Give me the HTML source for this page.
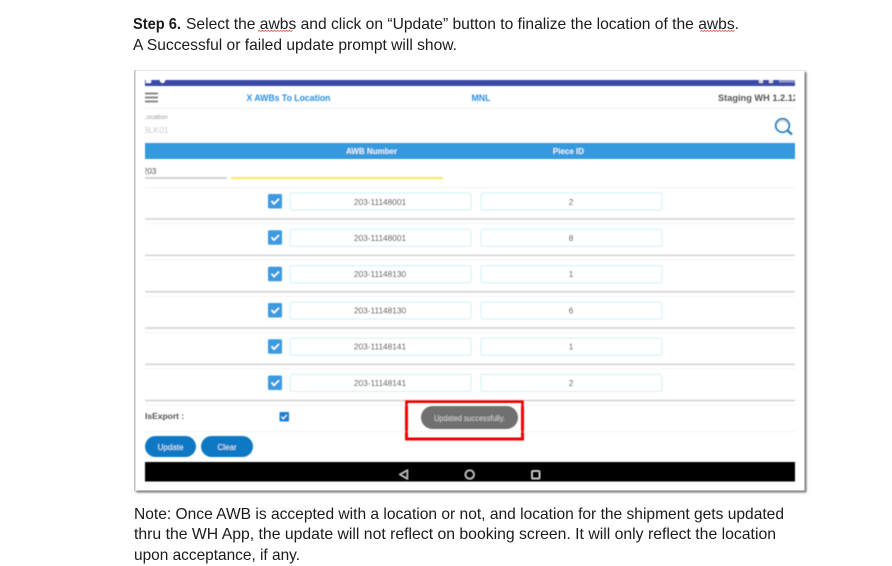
<!DOCTYPE html>
<html>
<head>
<meta charset="utf-8">
<style>
html,body{margin:0;padding:0;background:#fff;width:892px;height:566px;overflow:hidden}
svg{display:block;font-family:"Liberation Sans",sans-serif}
.doc{font-size:16px;fill:#1c1c1c}
.b{font-weight:bold}
.shot text{font-family:"Liberation Sans",sans-serif}
.num{font-size:8.300px;fill:#333;text-anchor:middle}
</style>
</head>
<body>
<svg width="892" height="566" viewBox="0 0 892 566" xmlns="http://www.w3.org/2000/svg">
<defs>
  <filter id="s" x="-5%" y="-5%" width="110%" height="110%"><feGaussianBlur stdDeviation="1"/></filter>
  <filter id="t" x="-5%" y="-5%" width="110%" height="110%"><feGaussianBlur stdDeviation="0.4"/></filter>
  <clipPath id="c"><rect x="145" y="70" width="650" height="420"/></clipPath>
  <g id="row">
    <rect x="145" y="4" width="650" height="1" fill="#f3f3f3"/>
    <rect x="268" y="-25" width="14" height="14.500" rx="1.500" fill="#3a9ae0"/>
    <path d="M271.500 -18l2.500 2.800 5-5" fill="none" stroke="#fff" stroke-width="1.600"/>
    <rect x="290" y="-26" width="181" height="17" rx="2" fill="#fff" stroke="#cff1f1" stroke-width="1"/>
    <rect x="481" y="-26" width="181" height="17" rx="2" fill="#fff" stroke="#cff1f1" stroke-width="1"/>
    <rect x="145" y="-.8" width="650" height="1.600" fill="#d4d4d4"/>
  </g>
</defs>

<text class="doc b" x="133" y="29" textLength="48" lengthAdjust="spacingAndGlyphs">Step 6.</text>
<text class="doc" x="186" y="29" textLength="553" lengthAdjust="spacingAndGlyphs">Select the awbs and click on “Update” button to finalize the location of the awbs.</text>
<path d="M258 31.500l1.500-1.200 1.500 1.200 1.500-1.200 1.500 1.200 1.500-1.200 1.500 1.200 1.500-1.200 1.500 1.200 1.500-1.200 1.500 1.200 1.500-1.200 1.500 1.200 1.500-1.200 1.500 1.200 1.500-1.200 1.500 1.200 1.500-1.200 1.500 1.200 1.500-1.200 1.500 1.200 1.500-1.200 1.500 1.200 1.500-1.200" fill="none" stroke="#d9534f" stroke-width=".8"/>
<path d="M700 31.500l1.500-1.200 1.500 1.200 1.500-1.200 1.500 1.200 1.500-1.200 1.500 1.200 1.500-1.200 1.500 1.200 1.500-1.200 1.500 1.200 1.500-1.200 1.500 1.200 1.500-1.200 1.500 1.200 1.500-1.200 1.500 1.200 1.500-1.200 1.500 1.200 1.500-1.200 1.500 1.200 1.500-1.200 1.500 1.200 1.500-1.200" fill="none" stroke="#d9534f" stroke-width=".8"/>
<text class="doc" x="133" y="50" textLength="324" lengthAdjust="spacingAndGlyphs">A Successful or failed update prompt will show.</text>

<!-- screenshot frame -->
<rect x="136" y="72" width="670.500" height="420.500" fill="#777" filter="url(#s)"/>
<rect x="135.500" y="70.500" width="669" height="420" fill="#fff"/>
<rect x="134" y="70" width="671" height="1" fill="#e4e4e4"/>
<rect x="134" y="70" width="1.500" height="421" fill="#c2c2c2"/>

<g class="shot" filter="url(#t)">
  <rect x="145" y="80" width="650" height="6" fill="#3b48a8"/>
  <rect x="146" y="80" width="5" height="3" fill="#fff"/>
  <circle cx="162.500" cy="80.500" r="2.500" fill="#fff"/>
  <rect x="759" y="80" width="4" height="3" fill="#ddd"/>
  <rect x="769" y="80" width="4" height="3" fill="#ddd"/>
  <rect x="779" y="80" width="16" height="2.500" fill="#8f96cc"/>

  <g fill="#8a8a8a">
    <rect x="145" y="92.500" width="13" height="2"/>
    <rect x="145" y="96.500" width="13" height="2"/>
    <rect x="145" y="100.500" width="13" height="2"/>
  </g>
  <text x="288.500" y="101" font-size="8.800" font-weight="bold" fill="#2b8fe0" text-anchor="middle" textLength="84" lengthAdjust="spacingAndGlyphs">X AWBs To Location</text>
  <text x="481" y="101" font-size="8.800" font-weight="bold" fill="#2b8fe0" text-anchor="middle">MNL</text>
  <g clip-path="url(#c)"><text x="718" y="101" font-size="8.800" font-weight="bold" fill="#555" textLength="80" lengthAdjust="spacingAndGlyphs">Staging WH 1.2.12</text></g>
  <rect x="145" y="108" width="650" height="1" fill="#f3f3f3"/>

  <g clip-path="url(#c)">
    <text x="143" y="119" font-size="6.500" fill="#999">Location</text>
    <text x="143" y="133" font-size="8.500" fill="#c8c8c8">BLK01</text>
    <text x="143" y="174" font-size="8" fill="#555">203</text>
  </g>
  <circle cx="782.500" cy="125.500" r="6.800" fill="none" stroke="#1f7fc0" stroke-width="1.700"/>
  <path d="M777.500 124a5.300 5.300 0 0 1 10 0" fill="none" stroke="#c4c4c4" stroke-width="1.200"/>
  <path d="M787.300 130.300l4.700 4.200" stroke="#1f7fc0" stroke-width="2.200" fill="none"/>

  <rect x="145" y="143" width="650" height="16" fill="#3499dd"/>
  <text x="371.500" y="154" font-size="8" font-weight="bold" fill="#e8f2fb" text-anchor="middle">AWB Number</text>
  <text x="568.500" y="154" font-size="8" font-weight="bold" fill="#e8f2fb" text-anchor="middle">Piece ID</text>

  <rect x="145" y="177" width="82" height="2" fill="#d2d2d2"/>
  <rect x="231" y="177" width="212" height="2" fill="#fbe85a"/>
  <rect x="145" y="187" width="650" height="1" fill="#f3f3f3"/>

  <use href="#row" y="219"/>
  <use href="#row" y="255.300"/>
  <use href="#row" y="291.800"/>
  <use href="#row" y="328"/>
  <use href="#row" y="364.300"/>
  <use href="#row" y="400.500"/>

  <text class="num" x="380" y="205">203-11148001</text><text class="num" x="571" y="205">2</text>
  <text class="num" x="380" y="241">203-11148001</text><text class="num" x="571" y="241">8</text>
  <text class="num" x="380" y="277">203-11148130</text><text class="num" x="571" y="277">1</text>
  <text class="num" x="380" y="313.500">203-11148130</text><text class="num" x="571" y="313.500">6</text>
  <text class="num" x="380" y="349.500">203-11148141</text><text class="num" x="571" y="349.500">1</text>
  <text class="num" x="380" y="385.800">203-11148141</text><text class="num" x="571" y="385.800">2</text>

  <text x="145" y="419" font-size="8.500" font-weight="bold" fill="#555">IsExport :</text>
  <rect x="279.500" y="412" width="9.500" height="9.500" rx="1" fill="#1f7fd0"/>
  <path d="M281.500 416.800l1.800 2 3.400-3.800" fill="none" stroke="#fff" stroke-width="1.100"/>
  <rect x="145" y="431" width="650" height="1" fill="#f1f1f1"/>

  <rect x="145" y="436" width="51" height="21" rx="10.500" fill="#0a78c4"/>
  <rect x="201" y="436" width="52" height="21" rx="10.500" fill="#0a78c4"/>
  <text x="170.500" y="450" font-size="8" fill="#dcecf8" text-anchor="middle">Update</text>
  <text x="227" y="450" font-size="8" fill="#dcecf8" text-anchor="middle">Clear</text>

  <rect x="145" y="462" width="650" height="19.500" fill="#050505"/>
  <path d="M407.300 470.300l-7.300 4.200 7.300 4.200z" fill="none" stroke="#e6e6e6" stroke-width="1"/>
  <circle cx="469.700" cy="474.500" r="4.300" fill="none" stroke="#e6e6e6" stroke-width="1"/>
  <rect x="532" y="471" width="7.500" height="7.500" rx=".8" fill="none" stroke="#e6e6e6" stroke-width="1"/>

  <rect x="406.500" y="401.500" width="116" height="37.500" fill="none" stroke="#f00000" stroke-width="3"/>
  <rect x="421" y="406" width="97" height="23" rx="11.500" fill="#6f6f6f"/>
  <text x="469.500" y="421" font-size="8" fill="#d6d6d6" text-anchor="middle" textLength="71" lengthAdjust="spacingAndGlyphs">Updated successfully.</text>
</g>

<text class="doc" x="134" y="519" textLength="650" lengthAdjust="spacingAndGlyphs">Note: Once AWB is accepted with a location or not, and location for the shipment gets updated</text>
<text class="doc" x="134" y="539" textLength="642" lengthAdjust="spacingAndGlyphs">thru the WH App, the update will not reflect on booking screen. It will only reflect the location</text>
<text class="doc" x="134" y="560" textLength="166" lengthAdjust="spacingAndGlyphs">upon acceptance, if any.</text>
</svg>
</body>
</html>
